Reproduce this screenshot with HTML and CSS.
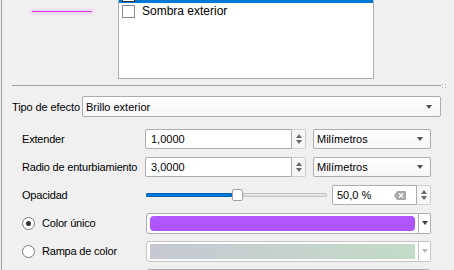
FILE: index.html
```html
<!DOCTYPE html>
<html lang="es">
<head>
    <meta charset="UTF-8">
    <title>Brillo exterior</title>
    <link rel="stylesheet" href="styles.css">
</head>
<body>
    <div class="panel">
        <div class="top">
            <div class="preview"><span class="stroke"></span></div>
            <ul class="effects">
                <li class="selected"><span class="check on"></span>Brillo exterior</li>
                <li><span class="check"></span>Sombra exterior</li>
            </ul>
        </div>

        <div class="divider"><span class="line"></span><span class="grip"></span></div>

        <div class="type-row">
            <span class="type-label">Tipo de efecto</span>
            <div class="combo wide">Brillo exterior<span class="arrow"></span></div>
        </div>

        <div class="form">
            <div class="row">
                <span class="label">Extender</span>
                <div class="spin">
                    <span class="value">1,0000</span>
                    <span class="buttons"><i class="up"></i><i class="down"></i></span>
                </div>
                <div class="combo unit">Milímetros<span class="arrow"></span></div>
            </div>

            <div class="row">
                <span class="label">Radio de enturbiamiento</span>
                <div class="spin">
                    <span class="value">3,0000</span>
                    <span class="buttons"><i class="up"></i><i class="down"></i></span>
                </div>
                <div class="combo unit">Milímetros<span class="arrow"></span></div>
            </div>

            <div class="row">
                <span class="label">Opacidad</span>
                <div class="slider">
                    <span class="fill"></span>
                    <span class="handle"></span>
                    <span class="rest"></span>
                </div>
                <div class="spin opacity">
                    <span class="value">50,0 %
                        <svg class="clear" width="12" height="9" viewBox="0 0 12 9">
                            <path d="M3 0h8a1 1 0 0 1 1 1v7a1 1 0 0 1-1 1H3L0 4.5z" fill="#a9a9a9"/>
                            <path d="M5 2.5l4 4M9 2.5l-4 4" stroke="#fff" stroke-width="1.3"/>
                        </svg>
                    </span>
                    <span class="buttons"><i class="up"></i><i class="down"></i></span>
                </div>
            </div>

            <div class="row">
                <span class="label"><span class="radio on"></span>Color único</span>
                <div class="colorbtn">
                    <span class="box"><span class="swatch solid"></span></span>
                    <span class="drop"><span class="arrow"></span></span>
                </div>
            </div>

            <div class="row">
                <span class="label"><span class="radio"></span>Rampa de color</span>
                <div class="colorbtn disabled">
                    <span class="box"><span class="swatch ramp"></span></span>
                    <span class="drop"><span class="arrow"></span></span>
                </div>
            </div>

            <div class="row">
                <span class="label"></span>
                <div class="cut"></div>
            </div>
        </div>
    </div>
</body>
</html>
```

FILE: styles.css
```css
* {
    box-sizing: border-box;
}

body {
    margin: 0;
    width: 454px;
    height: 270px;
    overflow: hidden;
    background: #f0f0f0;
    font-family: "Liberation Sans", Arial, sans-serif;
    font-size: 11px;
    color: #000;
}

.panel {
    height: 270px;
    margin-left: 1px;
    border-left: 1px solid #a0a0a0;
}

/* preview + effect list */
.top {
    display: flex;
    height: 79px;
}

.preview {
    width: 116px;
    padding: 11px 0 0 30px;
}

.stroke {
    display: block;
    width: 60px;
    height: 1px;
    background: #d63ce4;
    box-shadow: 0 0 3px 2px rgba(214, 60, 228, .15);
}

.effects {
    list-style: none;
    margin: -14px 0 0;
    padding: 0;
    width: 256px;
    height: 93px;
    background: #fff;
    border: 1px solid #adadad;
    font-size: 12px;
}

.effects li {
    display: flex;
    align-items: center;
    height: 16px;
    padding-left: 3px;
}

.effects li.selected {
    background: #0078d7;
    color: #fff;
}

.check {
    width: 13px;
    height: 13px;
    margin-right: 7px;
    border: 1px solid #8a8a8a;
    background: #fff;
}

.check.on {
    border-color: #333;
}

.divider {
    display: flex;
    align-items: center;
    height: 1px;
    margin: 6px 0 0 10px;
}

.divider .line {
    width: 429px;
    height: 1px;
    background: #a0a0a0;
}

.grip {
    width: 6px;
    height: 5px;
    background: radial-gradient(circle, #b4b4b4 0.7px, transparent 0.9px) 0 0 / 3px 3px;
}

/* effect type */
.type-row {
    display: flex;
    align-items: center;
    height: 21px;
    margin: 10px 0 0 10px;
}

.type-label {
    width: 70px;
    letter-spacing: -0.1px;
}

.combo {
    display: flex;
    align-items: center;
    height: 21px;
    padding-left: 3px;
    border: 1px solid #adadad;
    border-radius: 2px;
    background: linear-gradient(#fefefe, #f6f6f6);
}

.combo.wide {
    width: 359px;
}

.combo.unit {
    width: 118px;
    height: 20px;
    margin-left: 7px;
}

.arrow {
    width: 0;
    height: 0;
    margin-left: auto;
    border-left: 3.5px solid transparent;
    border-right: 3.5px solid transparent;
    border-top: 4px solid #505050;
}

.combo.wide .arrow {
    margin-right: 8px;
}

.combo.unit .arrow {
    margin-right: 7px;
}

/* form rows */
.form {
    margin: 8px 0 0 20px;
}

.row {
    display: flex;
    align-items: center;
    height: 28px;
}

.label {
    display: flex;
    align-items: center;
    width: 123px;
    letter-spacing: -0.2px;
}

.spin {
    display: flex;
    width: 161px;
    height: 20px;
}

.spin .value {
    flex: 1;
    display: flex;
    align-items: center;
    padding-left: 5px;
    background: #fff;
    border: 1px solid #adadad;
    border-radius: 2px 0 0 2px;
}

.spin .buttons {
    width: 14px;
    display: flex;
    flex-direction: column;
    align-items: center;
    justify-content: center;
    gap: 2px;
    background: #f7f7f7;
    border: 1px solid #cfcfcf;
    border-left: 0;
    border-radius: 0 2px 2px 0;
}

.up, .down {
    width: 0;
    height: 0;
    border-left: 3.5px solid transparent;
    border-right: 3.5px solid transparent;
}

.up {
    border-bottom: 4px solid #6a6a6a;
}

.down {
    border-top: 4px solid #6a6a6a;
}

.slider {
    display: flex;
    align-items: center;
    width: 181px;
    height: 12px;
    margin-left: 1px;
}

.slider .fill {
    width: 86px;
    height: 4px;
    background: #0078d7;
    border: 1px solid #0063b1;
    border-radius: 1px 0 0 1px;
}

.slider .handle {
    width: 11px;
    height: 12px;
    background: #fff;
    border: 1px solid #a5a5a5;
    border-radius: 2px;
}

.slider .rest {
    flex: 1;
    height: 4px;
    background: #e6e6e6;
    border: 1px solid #c4c4c4;
    border-radius: 0 1px 1px 0;
}

.spin.opacity {
    width: 99px;
    margin-left: 5px;
}

.spin.opacity .value {
    padding-left: 4px;
}

.clear {
    margin-left: auto;
    margin-right: 10px;
}

.radio {
    display: flex;
    align-items: center;
    justify-content: center;
    width: 13px;
    height: 13px;
    margin-right: 7px;
    border: 1px solid #7c7c7c;
    border-radius: 50%;
    background: #fff;
}

.radio.on::after {
    content: "";
    width: 5px;
    height: 5px;
    border-radius: 50%;
    background: #333;
}

.colorbtn {
    display: flex;
    width: 285px;
    height: 21px;
    margin-left: 1px;
}

.colorbtn .box {
    flex: 1;
    padding: 2px 3px;
    background: #fdfdfd;
    border: 1px solid #adadad;
    border-radius: 3px 0 0 3px;
}

.swatch {
    display: block;
    height: 100%;
    border-radius: 4px;
}

.swatch.solid {
    background: #ae55fb;
}

.swatch.ramp {
    border-radius: 1px;
    background: linear-gradient(100deg, #c6c8d3, #c3dcc7);
}

.colorbtn .drop {
    display: flex;
    align-items: center;
    justify-content: center;
    width: 12px;
    background: #fff;
    border: 1px solid #adadad;
    border-left: 0;
    border-radius: 0 2px 2px 0;
}

.colorbtn .drop .arrow {
    margin: 0;
    border-top-color: #404040;
}

.colorbtn.disabled .box,
.colorbtn.disabled .drop {
    border-color: #c4c4c4;
}

.colorbtn.disabled .drop .arrow {
    border-top-color: #b8b8b8;
}

.cut {
    width: 285px;
    height: 20px;
    margin-left: 1px;
    background: #fdfdfd;
    border: 1px solid #adadad;
    border-radius: 3px;
}
```
